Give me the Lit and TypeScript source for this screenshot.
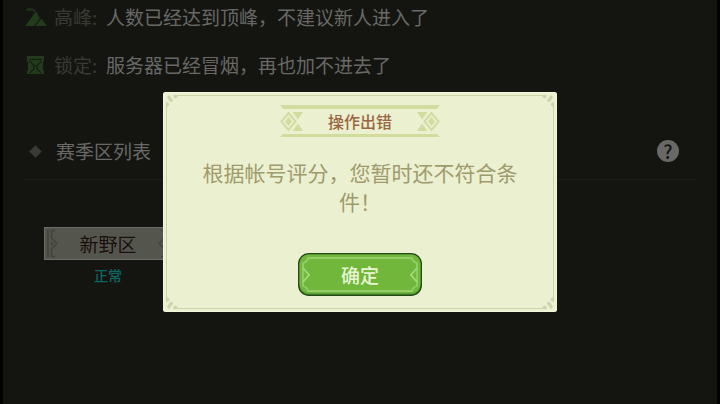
import { LitElement, html, css, svg } from "lit";
import { customElement, property } from "lit/decorators.js";

const FONT = css`"Noto Sans CJK SC", "Noto Sans", sans-serif`;

interface StatusNote {
  icon: "peak" | "lock";
  label: string;
  text: string;
}

// Full-width punctuation is written as escapes so that editors keep its width.
const NOTES: StatusNote[] = [
  { icon: "peak", label: "高峰:", text: "人数已经达到顶峰\uFF0C不建议新人进入了" },
  { icon: "lock", label: "锁定:", text: "服务器已经冒烟\uFF0C再也加不进去了" },
];

const ERROR_TEXT = "根据帐号评分\uFF0C您暂时还不符合条件\uFF01";

@customElement("status-icon")
export class StatusIcon extends LitElement {
  @property() name = "peak";

  static styles = css`
    :host { display: block; width: 22px; height: 20px; }
    .icon { display: block; width: 22px; height: 20px; }
  `;

  render() {
    const peak = svg`
      <path fill="#22301d" d="M0 3.500 3 1l4 .2 3 1.300 1 1.500-1 1.500-2.500-2L3.500 3.500z"/>
      <path fill="#213b1b" d="M0 19 4 14 10 5.500l1.500-.5 3.500 6.500L9 19z"/>
      <path fill="#213b1b" d="M10.300 19 16.300 11.500 22 19z"/>`;
    const lock = svg`
      <path fill="#213b1b" d="M2 1h17v5l-1 1v8l1 1v3H2v-3l1-1V7L2 6z"/>
      <path fill="none" stroke="#171c13" stroke-width="1.100" d="M4 4.500h13M4.500 6 9 10.500V14L5 18M16.500 6 12 10.500V14l4 4M8.500 11h4"/>`;
    return html`<svg class="icon" viewBox="0 0 22 20" aria-hidden="true">
      ${this.name === "peak" ? peak : lock}
    </svg>`;
  }
}

@customElement("error-dialog")
export class ErrorDialog extends LitElement {
  @property() heading = "";
  @property() message = "";

  static styles = css`
    :host { display: block; width: 394px; max-width: 92%; font-family: ${FONT}; }
    .panel {
      position: relative;
      box-sizing: border-box;
      padding: 13px 36px 16px;
      border-radius: 3px;
      background: #ebf0d0;
      box-shadow: inset 0 0 0 1px #f2f6da;
      display: flex;
      flex-direction: column;
      align-items: center;
    }
    .frame {
      position: absolute;
      inset: 3px;
      border: 1px solid #cdd4ac;
      pointer-events: none;
    }
    .corner { position: absolute; width: 12px; height: 12px; background: #ebf0d0; }
    .tl { top: -1px; left: -1px; }
    .tr { top: -1px; right: -1px; transform: scaleX(-1); }
    .bl { bottom: -1px; left: -1px; transform: scaleY(-1); }
    .br { bottom: -1px; right: -1px; transform: scale(-1, -1); }
    .banner {
      width: 160px;
      height: 32px;
      display: grid;
      place-items: center;
    }
    .banner > * { grid-area: 1 / 1; }
    .deco { display: block; width: 160px; height: 32px; }
    .heading {
      margin: 0;
      color: #9a6541;
      font-size: 16px;
      line-height: 32px;
      font-weight: 500;
    }
    .message {
      margin: 21px 0 0;
      color: #9f9b6d;
      font-size: 21px;
      line-height: 29px;
      text-align: center;
    }
    .ok {
      box-sizing: border-box;
      width: 124px;
      height: 43px;
      margin-top: 37px;
      padding: 0;
      border: 0;
      background: none;
      color: #e9f6d2;
      font-family: inherit;
      font-size: 19px;
      line-height: 43px;
      font-weight: 500;
      display: grid;
      place-items: center;
      cursor: pointer;
    }
    .ok > * { grid-area: 1 / 1; }
  `;

  private corner(where: string) {
    return html`<svg class="corner ${where}" viewBox="0 0 12 12" aria-hidden="true">
      <path fill="#cdd4ac" d="M1 2 3 0l4 5-.5 2H4zM7 0h5v1l-2 2.500L8 3zM0 7l3 1 .5 2L1 12H0z"/>
    </svg>`;
  }

  render() {
    return html`
      <section class="panel" role="alertdialog" aria-labelledby="heading" aria-describedby="message">
        <div class="frame">
          ${["tl", "tr", "bl", "br"].map((c) => this.corner(c))}
        </div>
        <div class="banner">
          <svg class="deco" viewBox="0 0 160 32" aria-hidden="true">
            <path fill="#d2dc9f" d="M0 0h160l-3 4H3zM3 29h154l3 3H0z"/>
            ${[0, 1].map((side) => svg`
              <g transform=${side ? "translate(160 0) scale(-1 1)" : ""}>
                <path fill="none" stroke="#d2dc9f" stroke-width="2" d="M8.500 8l7 8.500-7 8.500-7-8.500z"/>
                <path fill="#d2dc9f" d="M8.500 12l3.500 4.500-3.500 4.500L5 16.500zM12.500 7H23l-5 7.500zM18 18.500 23 26H12.500z"/>
              </g>`)}
          </svg>
          <h2 class="heading" id="heading">${this.heading}</h2>
        </div>
        <p class="message" id="message">${this.message}</p>
        <button class="ok" type="button">
          <svg width="124" height="43" viewBox="0 0 124 43" aria-hidden="true">
            <rect x=".75" y=".75" width="122.500" height="41.500" rx="10" fill="#5f9f38" stroke="#234914" stroke-width="1.500"/>
            <rect x="1.500" y="1.500" width="121" height="38.500" rx="9" fill="#70b73c"/>
            <path fill="none" stroke="#93cd69" stroke-width="1.800" d="M10 5h104q1 4 5 5v23q-4 1-5 5H10q-1-4-5-5V10q4-1 5-5z"/>
            <path fill="none" stroke="#a4d97c" stroke-width="1.800" d="M5 15l6 7-6 7M119 15l-6 7 6 7"/>
          </svg>
          <span>确定</span>
        </button>
      </section>
    `;
  }
}

@customElement("app-root")
export class AppRoot extends LitElement {
  static styles = css`
    :host {
      display: block;
      position: relative;
      min-height: 100vh;
      overflow: hidden;
      background: #000;
      font-family: ${FONT};
      font-size: 19px;
      line-height: 28px;
    }
    .page {
      box-sizing: border-box;
      min-height: 100vh;
      margin: 0 3px;
      padding: 3px 20px 0;
      background: #141511;
      color: #686966;
    }
    .notes {
      margin: 0;
      padding: 0;
      list-style: none;
      display: flex;
      flex-direction: column;
      gap: 20px;
    }
    .note { display: flex; align-items: center; padding-left: 2px; }
    .key { box-sizing: border-box; flex: 0 0 59px; padding-left: 7px; color: #393a34; }
    .bar {
      display: flex;
      align-items: center;
      margin-top: 58px;
      padding: 0 18px 14px 8px;
      border-bottom: 1px solid #1c1d1a;
    }
    .bullet { width: 9px; height: 9px; background: #393a34; transform: rotate(45deg); }
    .title { flex: 1; margin: 0 0 0 16px; font-size: 19px; line-height: 28px; font-weight: 400; }
    .help {
      width: 22px;
      height: 22px;
      padding: 0;
      border: 0;
      border-radius: 50%;
      background: #686966;
      color: #141511;
      font-family: inherit;
      font-size: 19px;
      line-height: 22px;
      font-weight: 500;
    }
    .zones { display: flex; margin-top: 47px; padding-left: 21px; }
    .zone { display: flex; flex-direction: column; align-items: center; width: 128px; }
    .server {
      box-sizing: border-box;
      width: 128px;
      height: 33px;
      padding: 0;
      border: 1px solid #6b6d65;
      background: #54564e;
      color: #1a0f0b;
      font-family: inherit;
      font-size: 19px;
      line-height: 31px;
      display: flex;
      align-items: center;
      justify-content: space-between;
    }
    .server svg { display: block; }
    .flip { transform: scaleX(-1); }
    .state { margin-top: 5px; color: #0c6664; font-size: 14px; line-height: 20px; font-weight: 500; }
    .overlay {
      position: absolute;
      inset: 0;
      display: flex;
      align-items: center;
      justify-content: center;
    }
  `;

  private edge(cls = "") {
    return html`<svg class=${cls} width="16" height="31" viewBox="0 0 16 31" aria-hidden="true">
      <path fill="#464840" d="M2 2h2v27H2z"/>
      <path fill="none" stroke="#42443b" stroke-width="1.500" d="M10 2.500H6.500V10L12 15.500 6.500 21v7.500H10"/>
      <path fill="#42443b" d="M6 13l3 2.500L6 18z"/>
    </svg>`;
  }

  render() {
    return html`
      <main class="page">
        <ul class="notes">
          ${NOTES.map((n) => html`
            <li class="note">
              <status-icon name=${n.icon}></status-icon>
              <span class="key">${n.label}</span>
              <span>${n.text}</span>
            </li>`)}
        </ul>
        <header class="bar">
          <span class="bullet"></span>
          <h1 class="title">赛季区列表</h1>
          <button class="help" type="button" aria-label="帮助">?</button>
        </header>
        <div class="zones">
          <div class="zone">
            <button class="server" type="button">${this.edge()}<span>新野区</span>${this.edge("flip")}</button>
            <span class="state">正常</span>
          </div>
        </div>
      </main>
      <div class="overlay">
        <error-dialog heading="操作出错" message=${ERROR_TEXT}></error-dialog>
      </div>
    `;
  }
}
